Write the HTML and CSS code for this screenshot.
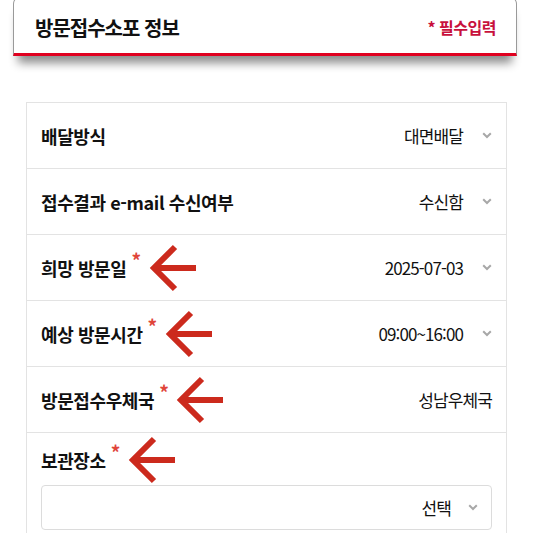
FILE: index.html
```html
<!DOCTYPE html>
<html lang="ko">

<head>
    <meta charset="UTF-8">
    <meta name="viewport" content="width=device-width, initial-scale=1.0">
    <title>방문접수소포 정보</title>

    <link rel="stylesheet" href="styles.css">
</head>

<body>
    <div class="panel-header">
        <h2>방문접수소포 정보</h2>
        <span class="required-note">* 필수입력</span>
    </div>

    <ul class="form-list">
        <li class="row">
            <span class="label">배달방식</span>
            <span class="value">대면배달<i class="chevron"></i></span>
        </li>
        <li class="row">
            <span class="label">접수결과 e-mail 수신여부</span>
            <span class="value">수신함<i class="chevron"></i></span>
        </li>
        <li class="row">
            <span class="label"><span>희망 방문일<em class="req">*</em></span><i class="arrow"></i></span>
            <span class="value">2025-07-03<i class="chevron"></i></span>
        </li>
        <li class="row">
            <span class="label"><span>예상 방문시간<em class="req">*</em></span><i class="arrow"></i></span>
            <span class="value">09:00~16:00<i class="chevron"></i></span>
        </li>
        <li class="row">
            <span class="label"><span>방문접수우체국<em class="req">*</em></span><i class="arrow"></i></span>
            <span class="value">성남우체국</span>
        </li>
        <li class="row row-block">
            <span class="label"><span>보관장소<em class="req">*</em></span><i class="arrow"></i></span>
            <div class="select-box">선택<i class="chevron"></i></div>
        </li>
    </ul>

    <script>
        var arrowSvg = '<svg width="48" height="48" viewBox="0 0 48 48"><path d="M5 24H47" stroke="#cc2a1d" stroke-width="6" fill="none"/><path d="M26 3L5 24L26 45" stroke="#cc2a1d" stroke-width="6" fill="none"/></svg>';
        var chevronSvg = '<svg width="10" height="7" viewBox="0 0 10 7"><path d="M1.2 1.2L5 5L8.8 1.2" stroke="#a8a8a8" stroke-width="2" fill="none"/></svg>';

        document.querySelectorAll('.arrow').forEach(function(el) {
            el.innerHTML = arrowSvg;
        });
        document.querySelectorAll('.chevron').forEach(function(el) {
            el.innerHTML = chevronSvg;
        });
    </script>
</body>

</html>
```

FILE: styles.css
```css
* {
    margin: 0;
    padding: 0;
    box-sizing: border-box;
}

body {
    background-color: #fff;
    font-family: "Noto Sans CJK KR", "Noto Sans", sans-serif;
    color: #111;
}

ul {
    list-style: none;
}

i,
em {
    font-style: normal;
}

.panel-header {
    display: flex;
    align-items: center;
    justify-content: space-between;
    height: 60px;
    margin: -4px 16px 0 13px;
    padding: 0 20px 0 21px;
    background-color: #fff;
    border: 1px solid #9a9a9a;
    border-bottom: 3px solid #e0001f;
    border-radius: 8px 8px 0 0;
    box-shadow: 0 12px 10px -5px rgba(0, 0, 0, 0.45);
}

.panel-header h2 {
    font-size: 20px;
    font-weight: bold;
    letter-spacing: -1px;
    padding-top: 4px;
}

.required-note {
    font-size: 16px;
    font-weight: bold;
    letter-spacing: -0.5px;
    color: #c8103c;
    padding-top: 4px;
}

.form-list {
    margin: 46px 26px 0 26px;
    border: 1px solid #e3e3e3;
    border-bottom: none;
}

.row {
    display: flex;
    align-items: center;
    justify-content: space-between;
    height: 66px;
    padding: 0 14px;
    border-bottom: 1px solid #e3e3e3;
}

.row .label {
    display: flex;
    align-items: center;
    font-size: 18px;
    font-weight: bold;
    letter-spacing: -0.4px;
}

/* 필수 표시는 글자 위쪽에 살짝 올려 붙인다 */
.req {
    position: relative;
    top: -8px;
    margin-left: 5px;
    font-size: 19px;
    font-weight: bold;
    line-height: 0;
    color: #e0453a;
}

.arrow {
    display: flex;
    margin-left: 8px;
}

.row .value {
    display: flex;
    align-items: center;
    font-size: 17px;
    letter-spacing: -0.9px;
}

.chevron {
    display: flex;
    margin-left: 19px;
}

.row-block {
    display: block;
    height: auto;
    padding-top: 13px;
    padding-bottom: 14px;
}

.row-block .label {
    height: 28px;
}

.select-box {
    display: flex;
    align-items: center;
    justify-content: flex-end;
    height: 45px;
    margin-top: 11px;
    padding-right: 13px;
    border: 1px solid #dcdcdc;
    border-radius: 4px;
    font-size: 17px;
    letter-spacing: -0.9px;
}

.select-box .chevron {
    margin-left: 17px;
}
```
